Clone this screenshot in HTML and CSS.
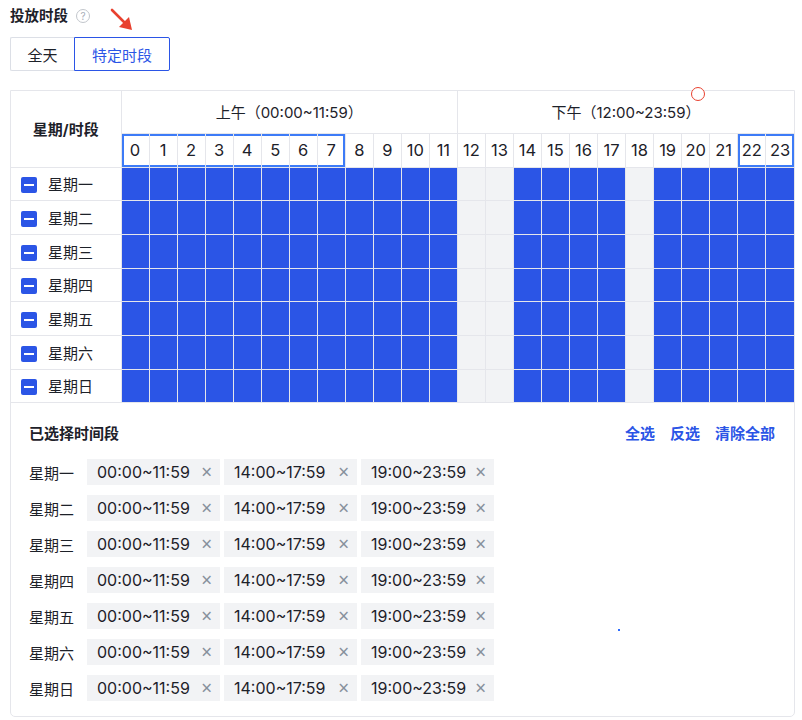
FILE: index.html
```html
<!DOCTYPE html>
<html lang="zh-CN">
<head>
    <meta charset="UTF-8">
    <title>投放时段</title>
    <link rel="stylesheet" href="styles.css">
</head>
<body>
    <div class="page">
        <div class="field-title">投放时段 <span class="help">?</span></div>

        <div class="segmented">
            <button class="seg">全天</button>
            <button class="seg active">特定时段</button>
        </div>

        <svg class="arrow" width="26" height="26" viewBox="0 0 26 26">
            <line x1="3" y1="3" x2="18" y2="18" stroke="#e8412f" stroke-width="2.6" stroke-linecap="round"/>
            <polygon points="23,23 10,20 20,10" fill="#e8412f"/>
        </svg>
        <span class="ring"></span>
        <span class="dot"></span>

        <div class="scheduler">
            <table class="grid">
                <colgroup>
                    <col class="col-day">
                </colgroup>
                <thead>
                    <tr class="half-row">
                        <th class="corner" rowspan="2">星期/时段</th>
                        <th colspan="12">上午（00:00~11:59）</th>
                        <th colspan="12">下午（12:00~23:59）</th>
                    </tr>
                    <tr class="hour-row" id="hour-row"></tr>
                </thead>
                <tbody id="day-rows"></tbody>
            </table>

            <div class="picked">
                <div class="picked-head">
                    <span class="picked-title">已选择时间段</span>
                    <span class="actions">
                        <a>全选</a>
                        <a>反选</a>
                        <a>清除全部</a>
                    </span>
                </div>
                <div id="picked-list" class="picked-list"></div>
            </div>
        </div>
    </div>

    <script>
        const days = ['星期一', '星期二', '星期三', '星期四', '星期五', '星期六', '星期日'];
        const off = [12, 13, 18];
        const ranges = ['00:00~11:59', '14:00~17:59', '19:00~23:59'];

        // hour header, with the two outlined groups
        const hourRow = document.getElementById('hour-row');
        for (let h = 0; h < 24; h++) {
            const th = document.createElement('th');
            th.textContent = h;
            if (h <= 7 || h >= 22) th.classList.add('hl');
            if (h === 0 || h === 22) th.classList.add('hl-start');
            if (h === 7 || h === 23) th.classList.add('hl-end');
            hourRow.appendChild(th);
        }

        const dayRows = document.getElementById('day-rows');
        const pickedList = document.getElementById('picked-list');
        days.forEach(day => {
            const tr = document.createElement('tr');
            tr.innerHTML = `<td class="day"><span class="check"></span>${day}</td>`;
            for (let h = 0; h < 24; h++) {
                const td = document.createElement('td');
                td.className = off.includes(h) ? 'slot' : 'slot on';
                tr.appendChild(td);
            }
            dayRows.appendChild(tr);

            const row = document.createElement('div');
            row.className = 'picked-row';
            row.innerHTML = `<span class="picked-day">${day}</span>` +
                ranges.map(r => `<span class="tag">${r}<i class="close">×</i></span>`).join('');
            pickedList.appendChild(row);
        });
    </script>
</body>
</html>
```

FILE: styles.css
```css
* {
    margin: 0;
    padding: 0;
    box-sizing: border-box;
}
body {
    font-family: Inter, "Noto Sans CJK SC", sans-serif;
    font-size: 15px;
    color: #1d2129;
    background: #fff;
}
.page {
    position: relative;
    padding: 5px 7px 0 10px;
}
.field-title {
    font-size: 14.5px;
    font-weight: bold;
    line-height: 22px;
    display: flex;
    align-items: center;
    gap: 8px;
}
.help {
    width: 14px;
    height: 14px;
    border: 1px solid #c2c6cc;
    border-radius: 50%;
    color: #a9aeb8;
    font-size: 10px;
    font-weight: normal;
    line-height: 12px;
    text-align: center;
}
.segmented {
    display: flex;
    margin-top: 10px;
}
.seg {
    height: 34px;
    font: 15px Inter, "Noto Sans CJK SC", sans-serif;
    color: #1d2129;
    background: #fff;
    border: 1px solid #dcdfe6;
    cursor: pointer;
}
.seg:first-child {
    border-radius: 2px 0 0 2px;
    border-right: none;
    width: 64px;
}
.seg.active {
    color: #2b55e6;
    border-color: #2b55e6;
    width: 96px;
    border-radius: 0 2px 2px 0;
}
.arrow {
    position: absolute;
    left: 109px;
    top: 7px;
}
.ring {
    position: absolute;
    left: 691px;
    top: 87px;
    width: 14px;
    height: 14px;
    border: 1.5px solid #e8412f;
    border-radius: 50%;
    background: #fff;
}
.dot {
    position: absolute;
    left: 618px;
    top: 629px;
    width: 2px;
    height: 2px;
    background: #2b6bff;
}
.scheduler {
    margin-top: 19px;
    border: 1px solid #e5e6eb;
    border-radius: 0 0 5px 5px;
}
.grid {
    width: 100%;
    border-collapse: collapse;
    table-layout: fixed;
}
.col-day {
    width: 110px;
}
.grid th,
.grid td {
    border: 1px solid #e5e6eb;
    text-align: center;
    font-weight: normal;
    padding: 0;
}
.grid tr:first-child th {
    border-top: none;
}
.grid tr th:last-child,
.grid tr td:last-child {
    border-right: none;
}
.grid .corner,
.grid .day {
    border-left: none;
}
.corner {
    font-size: 15px;
    font-weight: bold !important;
}
.half-row th {
    height: 42px;
    font-size: 15px;
}
.hour-row th {
    height: 34px;
    font-size: 16.5px;
}
.hl {
    box-shadow: inset 0 2px #3d7bf7, inset 0 -2px #3d7bf7;
}
.hl-start {
    box-shadow: inset 0 2px #3d7bf7, inset 0 -2px #3d7bf7, inset 2px 0 #3d7bf7;
}
.hl-end {
    box-shadow: inset 0 2px #3d7bf7, inset 0 -2px #3d7bf7, inset -2px 0 #3d7bf7;
}
tbody tr {
    height: 33.7px;
}
.day {
    text-align: left !important;
    font-size: 15px;
    padding-left: 10px !important;
}
.check {
    display: inline-block;
    width: 16px;
    height: 16px;
    margin-right: 11px;
    vertical-align: -3px;
    background: #2b55e6;
    border-radius: 2px;
    position: relative;
}
.check::after {
    content: "";
    position: absolute;
    left: 3px;
    right: 3px;
    top: 7px;
    height: 2px;
    background: #fff;
}
.slot {
    background: #f2f3f5;
}
.slot.on {
    background: #2b55e6;
}
.picked {
    padding: 20px 19px 15px 18px;
}
.picked-head {
    display: flex;
    justify-content: space-between;
    line-height: 22px;
    font-size: 15px;
    font-weight: bold;
}
.actions {
    display: flex;
    gap: 15px;
    color: #2b55e6;
}
.picked-list {
    margin-top: 14px;
    display: flex;
    flex-direction: column;
    gap: 10px;
}
.picked-row {
    display: flex;
    align-items: center;
    gap: 4px;
}
.picked-day {
    width: 54px;
    font-size: 15px;
}
.tag {
    width: 133px;
    height: 26px;
    display: flex;
    align-items: center;
    justify-content: space-between;
    padding: 0 8px 0 10px;
    background: #f2f3f5;
    font-size: 16px;
}
.close {
    font-style: normal;
    font-family: "Noto Sans", sans-serif;
    font-size: 19px;
    line-height: 1;
    color: #86909c;
}
```
